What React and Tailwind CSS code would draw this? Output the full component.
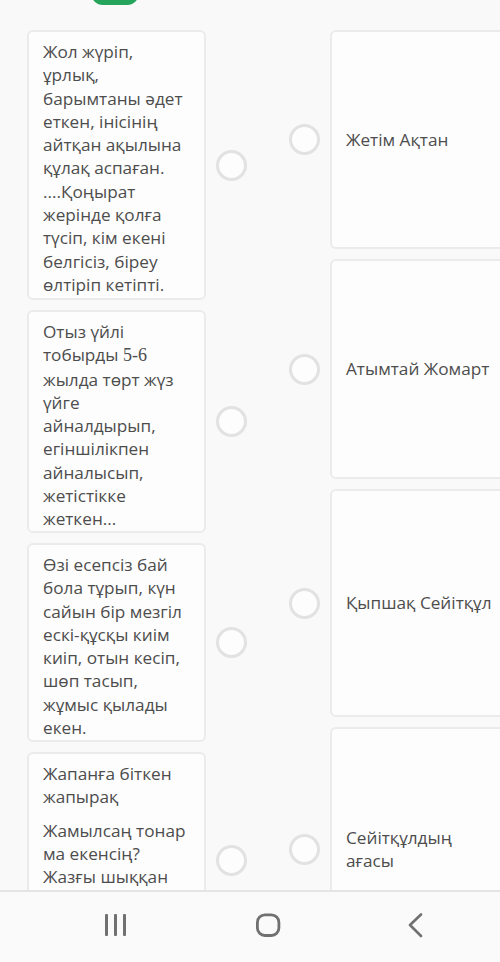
import React from "react";

const leftCards = [
  { h: "h-[270px]", paras: [["Жол жүріп, ұрлық, барымтаны әдет еткен, інісінің айтқан ақылына құлақ аспаған. ....Қоңырат жерінде қолға түсіп, кім екені белгісіз, біреу өлтіріп кетіпті."]] },
  { h: "h-[223px]", special: true },
  { h: "h-[199px]", paras: [["Өзі есепсіз бай бола тұрып, күн сайын бір мезгіл ескі-құсқы киім киіп, отын кесіп, шөп тасып, жұмыс қылады екен."]] },
  { h: "h-[216px]", paras: [["Жапанға біткен жапырақ"], ["Жамылсаң тонар ма екенсің? Жазғы шыққан көк шөптей құлпырған"]] },
];

const rightCards = [
  { h: "h-[219px]", text: "Жетім Ақтан" },
  { h: "h-[220px]", text: "Атымтай Жомарт" },
  { h: "h-[228px]", text: "Қыпшақ Сейітқұл" },
  { h: "h-[244px]", text: "Сейітқұлдың ағасы" },
];

function Radio() {
  return <div className="w-[31px] h-[31px] shrink-0 rounded-full border-[3px] border-[#e2e2e2] bg-[#fdfdfd]" />;
}

export default function App() {
  return (
    <div className="w-[500px] h-[962px] overflow-hidden flex flex-col bg-[#f9f9f9] text-[#4d4d4d] text-[17.2px] leading-[23.3px]" style={{ fontFamily: '"Open Sans", "Noto Sans", sans-serif' }}>
      <div className="flex-1 overflow-hidden">
        <div className="flex pl-[91px]">
          <div className="w-[48px] h-[24px] -mt-[19px] rounded-full bg-[#25a55b]" />
        </div>
        <div className="flex pl-[27px] pt-[25px]">
          <div className="flex flex-col gap-[10px] shrink-0">
            {leftCards.map((c, i) => (
              <div key={i} className="flex items-center">
                <div className={`w-[179px] ${c.h} shrink-0 rounded-md border-2 border-[#ebebeb] bg-[#fdfdfd] pl-[14px] pr-[14px] pt-[8px] overflow-hidden`}>
                  {c.special ? (
                    <p>
                      Отыз үйлі тобырды <span style={{ fontFamily: '"Liberation Serif", serif' }} className="text-[18px]">5-6</span> жылда төрт жүз үйге айналдырып, егіншілікпен айналысып, жетістікке жеткен...
                    </p>
                  ) : (
                    c.paras.map((p, j) => (
                      <p key={j} className={j > 0 ? "mt-[10px]" : ""}>{p[0]}</p>
                    ))
                  )}
                </div>
                <div className="ml-[10px]"><Radio /></div>
              </div>
            ))}
          </div>
          <div className="flex flex-col gap-[10px] ml-[42px] shrink-0">
            {rightCards.map((c, i) => (
              <div key={i} className="flex items-center">
                <Radio />
                <div className={`ml-[10px] w-[184px] ${c.h} shrink-0 rounded-md border-2 border-[#ebebeb] bg-[#fdfdfd] px-[14px] flex items-center`}>
                  <p>{c.text}</p>
                </div>
              </div>
            ))}
          </div>
        </div>
      </div>
      <div className="h-[72px] shrink-0 border-t-2 border-[#e4e4e4] bg-[#fafafa] flex items-start pt-[21px]">
        <div className="w-full flex justify-between pl-[104px] pr-[77px]">
          <svg width="24" height="24" viewBox="0 0 24 24">
            <rect x="1" y="1" width="3" height="22" rx="1" fill="#707070" />
            <rect x="10" y="1" width="3" height="22" rx="1" fill="#707070" />
            <rect x="19" y="1" width="3" height="22" rx="1" fill="#707070" />
          </svg>
          <svg width="26" height="25" viewBox="0 0 26 25">
            <rect x="2.4" y="1.9" width="21.5" height="20.6" rx="7.5" fill="none" stroke="#707070" strokeWidth="2.8" />
          </svg>
          <svg width="16" height="25" viewBox="0 0 16 25">
            <path d="M14 1.5 L3 12 L14 23" fill="none" stroke="#707070" strokeWidth="2.6" strokeLinecap="round" strokeLinejoin="round" />
          </svg>
        </div>
      </div>
    </div>
  );
}
